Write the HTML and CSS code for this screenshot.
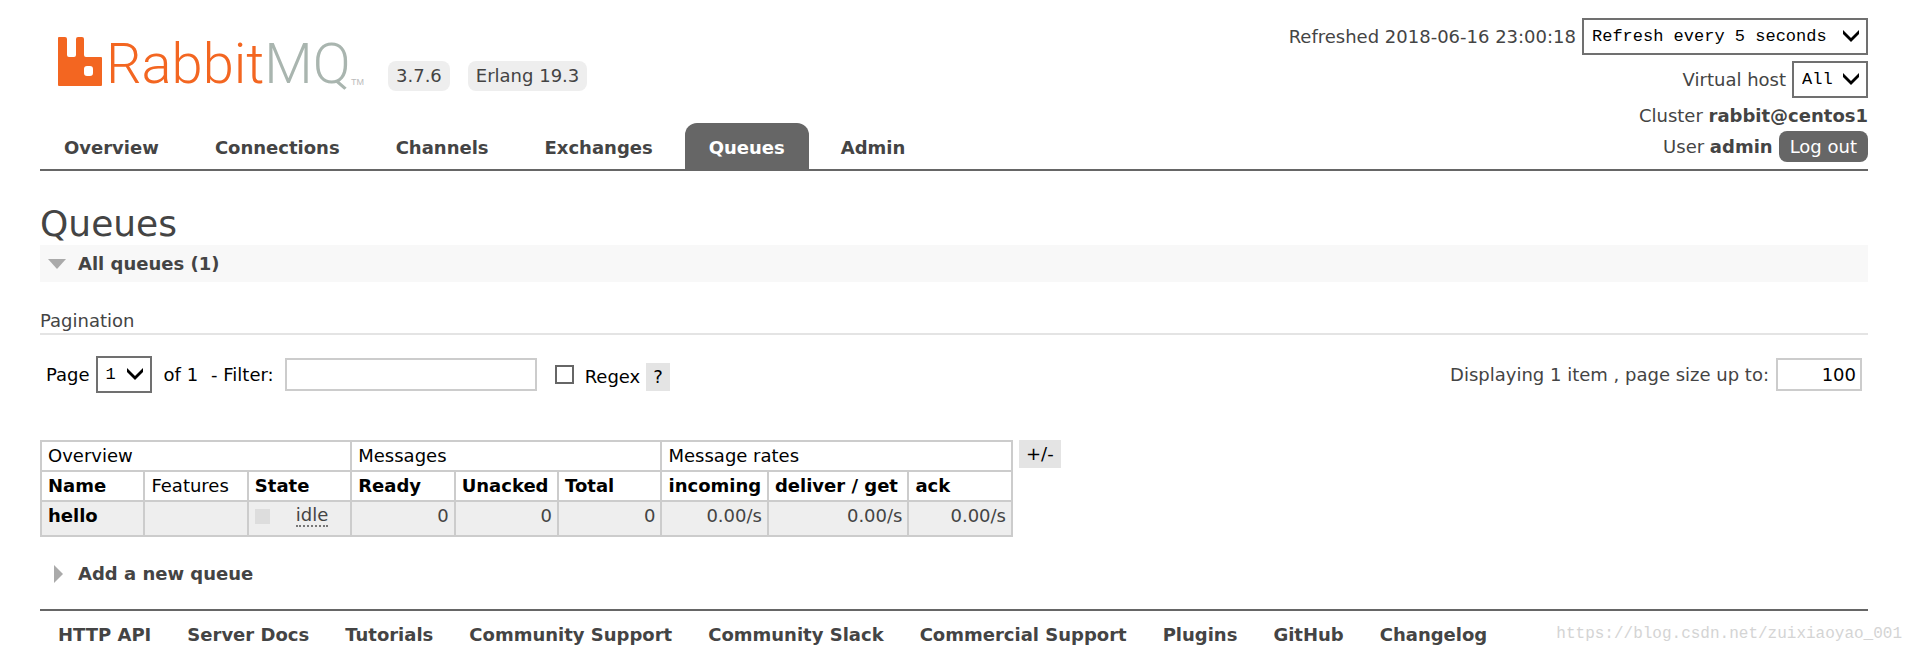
FILE: index.html
```
<!DOCTYPE html>
<html lang="en">
<head>
<meta charset="utf-8">
<title>RabbitMQ Management</title>
<link rel="stylesheet" href="styles.css">
</head>
<body>
<header class="header">
  <div class="brand-col">
    <div class="brand">
      <a class="logo" href="#" aria-label="RabbitMQ">
        <svg width="308" height="72" viewBox="0 0 308 72">
          <path fill="#f36621" d="M2 6q0-1 1-1h6q2 0 2 2v16q0 2 2 2h5q2 0 2-2V7q0-2 2-2h4q2 0 2 2v16q0 2 2 2h15q1 0 1 1v27q0 1-1 1H3q-1 0-1-1z M31 34q-3 0-3 3v4q0 3 3 3h3q3 0 3-3v-4q0-3-3-3z" fill-rule="evenodd"/>
          <text class="logo-text" x="50" y="51"><tspan fill="#f36621">Rabbit</tspan><tspan fill="#a9b5af">MQ</tspan></text>
          <text class="logo-tm" x="295" y="53">TM</text>
        </svg>
      </a>
      <span class="badge">3.7.6</span>
      <span class="badge">Erlang 19.3</span>
    </div>
    <nav class="tabs">
      <a href="#">Overview</a>
      <a href="#">Connections</a>
      <a href="#">Channels</a>
      <a href="#">Exchanges</a>
      <a href="#" class="selected">Queues</a>
      <a href="#">Admin</a>
    </nav>
  </div>
  <div class="status">
    <div class="status-row">
      <label for="refresh">Refreshed 2018-06-16 23:00:18</label>
      <span class="select"><select id="refresh" class="w-refresh"><option>Refresh every 5 seconds</option></select><svg class="chevron" viewBox="0 0 18 14"><path d="M1 1l8 8 8-8v4l-8 8-8-8z"/></svg></span>
    </div>
    <div class="status-row">
      <label for="vhost">Virtual host</label>
      <span class="select"><select id="vhost" class="w-vhost"><option>All</option></select><svg class="chevron" viewBox="0 0 18 14"><path d="M1 1l8 8 8-8v4l-8 8-8-8z"/></svg></span>
    </div>
    <div class="cluster">Cluster <b>rabbit@centos1</b></div>
    <div class="status-row">
      <span>User <b>admin</b></span>
      <button class="logout">Log out</button>
    </div>
  </div>
</header>

<main class="main">
  <h1>Queues</h1>
  <h2 class="section open"><svg width="18" height="10" viewBox="0 0 18 10"><path fill="#aaa" d="M0 0h18L9 10z"/></svg>All queues (1)</h2>
  <h3>Pagination</h3>
  <div class="pager">
    <div class="pager-left">
      <label for="page">Page</label>
      <span class="select"><select id="page" class="w-page"><option>1</option></select><svg class="chevron" viewBox="0 0 18 14"><path d="M1 1l8 8 8-8v4l-8 8-8-8z"/></svg></span>
      <span class="of">of 1</span>
      <label for="filter">- Filter:</label>
      <input id="filter" class="filter" type="text">
      <input id="regex" class="check" type="checkbox">
      <label for="regex" class="regex">Regex</label>
      <button class="help">?</button>
    </div>
    <div class="pager-right">
      <label for="size">Displaying 1 item , page size up to:</label>
      <input id="size" class="size" type="text" value="100">
    </div>
  </div>
  <div class="list">
    <table class="queues">
      <colgroup><col class="c1"><col class="c1"><col class="c1"><col class="c1"><col class="c1"><col class="c1"><col class="c2"><col class="c3"><col class="c1"></colgroup>
      <thead>
        <tr><th colspan="3" class="plain">Overview</th><th colspan="3" class="plain">Messages</th><th colspan="3" class="plain">Message rates</th></tr>
        <tr><th>Name</th><th class="plain">Features</th><th>State</th><th>Ready</th><th>Unacked</th><th>Total</th><th>incoming</th><th>deliver / get</th><th>ack</th></tr>
      </thead>
      <tbody>
        <tr><td><a href="#">hello</a></td><td></td><td><span class="state"><i></i><abbr>idle</abbr></span></td><td class="num">0</td><td class="num">0</td><td class="num">0</td><td class="num">0.00/s</td><td class="num">0.00/s</td><td class="num">0.00/s</td></tr>
      </tbody>
    </table>
    <button class="columns">+/-</button>
  </div>
  <h2 class="section"><svg width="18" height="18" viewBox="0 0 18 18"><path fill="#aaa" d="M6 0l9 9-9 9z"/></svg>Add a new queue</h2>
</main>

<footer class="footer">
  <a href="#">HTTP API</a>
  <a href="#">Server Docs</a>
  <a href="#">Tutorials</a>
  <a href="#">Community Support</a>
  <a href="#">Community Slack</a>
  <a href="#">Commercial Support</a>
  <a href="#">Plugins</a>
  <a href="#">GitHub</a>
  <a href="#">Changelog</a>
</footer>
<div class="watermark">https://blog.csdn.net/zuixiaoyao_001</div>
</body>
</html>
```
FILE: styles.css
```
* { box-sizing: border-box; }
body {
  margin: 0;
  padding: 18px 46px 0 40px;
  background: #fff;
  color: #444;
  font: 18px/22px Verdana, "DejaVu Sans", sans-serif;
}
a { color: #444; text-decoration: none; font-weight: bold; }
button, input, select { margin: 0; font: inherit; color: #000; }

.header {
  display: flex;
  justify-content: space-between;
  border-bottom: 2px solid #666;
}
.brand-col { display: flex; flex-direction: column; justify-content: space-between; }
.brand { display: flex; align-items: flex-end; gap: 18px; padding: 14px 0 0 16px; }
.logo { display: block; height: 59px; margin-right: 6px; }
.logo svg { display: block; }
.logo-text { font: 300 56px Roboto, "Liberation Sans", sans-serif; }
.logo-tm { font: 9px "Liberation Sans", sans-serif; fill: #bbb; }
.badge { padding: 4px 8px; border-radius: 8px; background: #eee; }
.tabs { display: flex; gap: 8px; }
.tabs a { padding: 14px 24px 10px; border-radius: 12px 12px 0 0; }
.tabs .selected { background: #666; color: #fff; }

.status { display: flex; flex-direction: column; align-items: flex-end; gap: 6px; padding-bottom: 7px; }
.status-row { display: flex; align-items: center; gap: 6px; }
.cluster { margin: 1px 0 -2px; }
.logout { padding: 4px 11px; border: 0; border-radius: 8px; background: #666; color: #fff; line-height: 23px; }

.select { position: relative; display: inline-flex; }
.select select {
  appearance: none;
  height: 37px;
  padding: 0 8px;
  border: 2px solid #707070;
  border-radius: 0;
  background: #fff;
  font: 17px "Liberation Mono", monospace;
}
.chevron { position: absolute; right: 8px; top: 11px; width: 18px; height: 14px; pointer-events: none; }
.w-refresh { width: 286px; }
.w-vhost { width: 76px; }
.w-page { width: 56px; }

h1 { margin: 32px 0 0; font-size: 36px; font-weight: normal; line-height: 42px; }
.section { display: flex; align-items: center; gap: 12px; margin: 0; padding: 8px; font-size: 18px; line-height: 21px; }
.open { background: #f8f8f8; }
h3 { margin: 28px 0 0; padding-bottom: 1px; border-bottom: 2px solid #e4e4e4; font-size: 18px; font-weight: normal; line-height: 22px; }

.pager { display: flex; justify-content: space-between; align-items: center; padding: 21px 6px; color: #444; }
.pager-left { display: flex; align-items: center; gap: 6px; color: #000; }
.of { margin: 0 7px 0 6px; }
.filter, .size { height: 33px; border: 2px solid #ccc; background: #fff; }
.filter { width: 252px; margin-left: 5px; }
.check { appearance: none; width: 19px; height: 19px; margin: 0 5px 0 12px; border: 2px solid #666; background: #fff; }
.regex, .help { margin-top: 5px; }
.help, .columns { padding: 3px 7px; border: 0; background: #e4e4e4; line-height: 22px; }
.pager-right { display: flex; align-items: center; gap: 7px; }
.size { width: 86px; padding: 0 4px; text-align: right; }

.list { display: flex; align-items: flex-start; gap: 6px; padding-top: 26px; }
.queues { border-collapse: collapse; table-layout: fixed; width: 973px; color: #000; }
.c1 { width: 103px; }
.c2 { width: 106px; }
.c3 { width: 140px; }
.queues th, .queues td { height: 30px; padding: 3px 5px 3px 6px; border: 2px solid #ccc; text-align: left; line-height: 22px; white-space: nowrap; }
.queues .plain { font-weight: normal; }
.queues td { height: 35px; padding-bottom: 8px; background: #eee; }
.queues td a { color: #000; }
.queues .num { color: #444; text-align: right; }
.state { display: flex; align-items: center; gap: 26px; color: #444; }
.state i { width: 15px; height: 15px; background: #ddd; }
.state abbr { border-bottom: 2px dotted #777; line-height: 20px; }
.list + .section { margin-top: 18px; }

.footer { display: flex; flex-wrap: wrap; gap: 36px; margin-top: 17px; padding: 13px 18px; border-top: 2px solid #666; }
.watermark { position: absolute; right: 12px; bottom: 10px; color: #d4d4d4; font: 16px "Liberation Mono", monospace; }
```
